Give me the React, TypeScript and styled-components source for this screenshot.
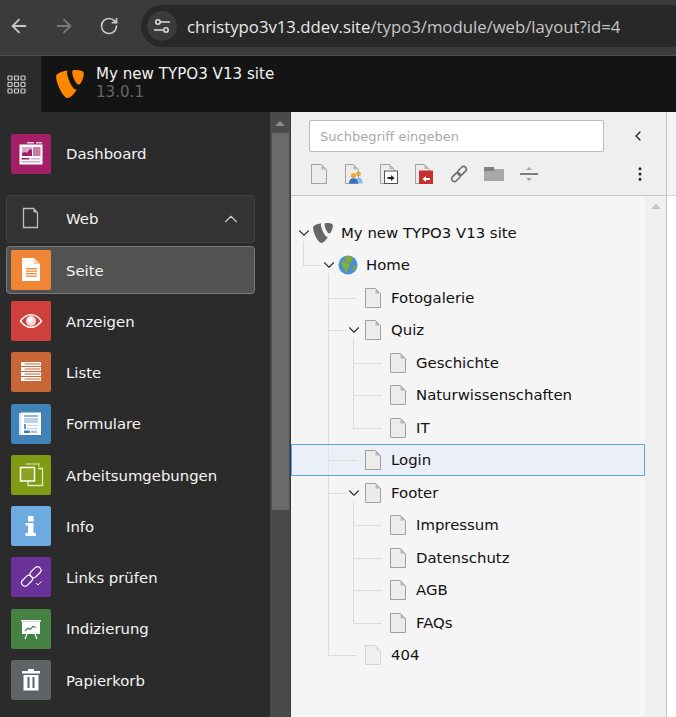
import React from 'react';
import styled, { createGlobalStyle } from 'styled-components';
import { ArrowLeft, ArrowRight, RotateCw, ChevronUp, ChevronDown, ChevronLeft, EllipsisVertical } from 'lucide-react';
import { SiTypo3 } from 'react-icons/si';

const GlobalStyle = createGlobalStyle`
  html, body { margin: 0; padding: 0; overflow: hidden; }
  body { font-family: "DejaVu Sans", Verdana, sans-serif; }
  * { box-sizing: border-box; }
`;

const Page = styled.div`
  width: 676px;
  height: 717px;
  display: flex;
  flex-direction: column;
  overflow: hidden;
  background: #fff;
`;

/* browser chrome */
const BrowserBar = styled.div`
  height: 56px;
  flex: none;
  background: #3b3b3b;
  border-bottom: 1px solid #4e4e4e;
  display: flex;
  align-items: center;
  padding: 0 0 3px 7px;
`;

const NavButton = styled.span<{ $dim?: boolean }>`
  width: 23px;
  height: 23px;
  margin-right: 22px;
  display: flex;
  align-items: center;
  justify-content: center;
  color: ${p => (p.$dim ? '#777' : '#c8c8c8')};
`;

const AddressPill = styled.div`
  flex: 1;
  height: 42px;
  margin-left: -1px;
  margin-right: -20px;
  border-radius: 21px;
  background: #282828;
  display: flex;
  align-items: center;
  padding-left: 6px;
`;

const TuneBadge = styled.span`
  width: 30px;
  height: 30px;
  border-radius: 50%;
  background: #3b3b3b;
  display: flex;
  align-items: center;
  justify-content: center;
  margin-right: 10px;
`;

const Url = styled.span`
  font-family: "Open Sans", "Noto Sans", sans-serif;
  font-size: 16.73px;
  color: #c7c7c7;
  white-space: nowrap;
  b { font-weight: 400; color: #e8e8e8; }
`;

/* typo3 top bar */
const TopBar = styled.header`
  height: 56px;
  flex: none;
  display: flex;
  background: #141414;
`;

const GridButton = styled.div`
  width: 41px;
  background: #2b2b2b;
  display: flex;
  align-items: center;
  justify-content: center;
  padding-right: 8px;
`;

const LogoSlot = styled.div`
  width: 55px;
  display: flex;
  align-items: center;
  justify-content: center;
  padding-left: 3px;
  color: #ff8700;
`;

const SiteName = styled.div`
  display: flex;
  flex-direction: column;
  justify-content: center;
  padding-bottom: 2px;
`;

const SiteTitle = styled.span`
  font-size: 15.1px;
  line-height: 18px;
  color: #f2f2f2;
`;

const SiteVersion = styled.span`
  font-size: 15.1px;
  line-height: 18px;
  color: #666;
`;

const Body = styled.div`
  flex: 1;
  min-height: 0;
  display: flex;
`;

/* module menu */
const Sidebar = styled.nav`
  width: 270px;
  flex: none;
  background: #2b2b2b;
  padding: 18px 0 0 6px;
`;

const MenuList = styled.div`
  display: flex;
  flex-direction: column;
  gap: 3.25px;
`;

const MenuItem = styled.div<{ $active?: boolean; $group?: boolean }>`
  width: 249px;
  height: 48px;
  padding: 0 4px;
  display: flex;
  align-items: center;
  gap: 15px;
  border-radius: 4px;
  border: 1px solid ${p => (p.$active ? '#7a7a7a' : p.$group ? '#414141' : 'transparent')};
  background: ${p => (p.$active ? '#525252' : p.$group ? '#333' : 'transparent')};
  color: #f4f4f4;
  font-size: 14.85px;
  margin-bottom: ${p => (p.$group ? '-0.3px' : '0')};
`;

const DashboardItem = styled(MenuItem)`
  margin-bottom: 17px;
`;

const Tile = styled.span<{ $bg?: string }>`
  width: 40px;
  height: 40px;
  flex: none;
  border-radius: 2px;
  background: ${p => p.$bg ?? 'transparent'};
  display: flex;
  svg { display: block; }
`;

const ItemLabel = styled.span<{ $top?: number }>`
  flex: 1;
  padding-top: ${p => p.$top ?? 1.2}px;
`;

const GroupCaret = styled.span`
  display: flex;
  color: #ccc;
  margin-right: 8px;
`;

/* scrollbar */
const ScrollTrack = styled.div`
  width: 20px;
  flex: none;
  background: #4a4a4a;
  padding: 9px 2px 0;
  display: flex;
  flex-direction: column;
  align-items: center;
`;

const ScrollArrow = styled.span`
  width: 0;
  height: 0;
  border-left: 5px solid transparent;
  border-right: 5px solid transparent;
  border-bottom: 5px solid #8c8c8c;
`;

const ScrollThumb = styled.div`
  width: 17px;
  height: 377px;
  margin-top: 7px;
  background: #6a6a6a;
`;

/* page tree */
const TreePanel = styled.section`
  width: 377px;
  flex: none;
  display: flex;
  flex-direction: column;
  border-left: 1px solid #3a3a3a;
  border-right: 1px solid #c4c4c4;
  background: #efefef;
`;

const TreeToolbar = styled.div`
  height: 84px;
  flex: none;
  padding: 8px 0 0 18px;
  border-bottom: 1px solid #c6c6c6;
`;

const SearchRow = styled.div`
  display: flex;
  align-items: center;
`;

const SearchInput = styled.input`
  width: 295px;
  height: 32px;
  padding: 0 10px;
  border: 1px solid #bbb;
  border-radius: 2px;
  background: #fff;
  font-family: inherit;
  font-size: 13px;
  &::placeholder { color: #aaa; opacity: 1; }
`;

const ToolIcons = styled.div`
  display: flex;
  align-items: center;
  height: 44px;
  margin-left: -8px;
`;

const ToolSlot = styled.span`
  width: 35px;
  display: flex;
  justify-content: center;
`;

const ToolButton = styled.span<{ $left: number }>`
  display: flex;
  margin-left: ${p => p.$left}px;
  color: #222;
`;

const TreeArea = styled.div`
  flex: 1;
  min-height: 0;
  display: flex;
`;

const TreeScroll = styled.div`
  width: 354px;
  flex: none;
  padding-top: 20.4px;
  background: #f5f5f5;
`;

const TreeGutter = styled.div`
  flex: 1;
  display: flex;
  justify-content: center;
  padding-top: 8px;
`;

const GutterArrow = styled.span`
  width: 0;
  height: 0;
  border-left: 5px solid transparent;
  border-right: 5px solid transparent;
  border-bottom: 5px solid #c4c4c4;
`;

const Branch = styled.div<{ $level: number; $tail: number }>`
  position: relative;
  &::before {
    content: '';
    position: absolute;
    left: ${p => 25 * p.$level - 13}px;
    top: -8px;
    bottom: ${p => p.$tail}px;
    width: 1px;
    background: #dcdcdc;
  }
`;

const Row = styled.div<{ $level: number; $selected?: boolean }>`
  position: relative;
  height: 32.5px;
  padding-left: ${p => 21 + 25 * p.$level}px;
  display: flex;
  align-items: center;
  font-size: 14.9px;
  color: #111;
  border: 1px solid ${p => (p.$selected ? '#5aa8ec' : 'transparent')};
  border-width: ${p => (p.$selected ? '1px' : '0 0 0 1px')};
  background: ${p => (p.$selected ? 'rgba(225, 235, 250, 0.55)' : 'transparent')};
  &::before {
    content: '';
    display: ${p => (p.$level === 0 ? 'none' : 'block')};
    position: absolute;
    left: ${p => 25 * p.$level - 14}px;
    top: 50%;
    width: 29px;
    height: 1px;
    background: #dcdcdc;
  }
`;

const Toggle = styled.span<{ $level: number }>`
  position: absolute;
  left: ${p => 25 * p.$level + 5}px;
  top: 50%;
  margin-top: -8px;
  width: 14px;
  height: 16px;
  display: flex;
  align-items: center;
  justify-content: center;
  background: #f5f5f5;
  color: #333;
  svg { flex: none; }
`;

const NodeIcon = styled.span`
  position: relative;
  width: 20px;
  margin-right: 8px;
  flex: none;
  display: flex;
  justify-content: center;
  color: #666;
`;

const Content = styled.div`
  flex: 1;
  display: flex;
  flex-direction: column;
`;

const ContentHead = styled.div`
  height: 84px;
  background: #f4f4f4;
  border-bottom: 1px solid #d6d6d6;
`;

/* drawings */
function TuneIcon() {
  return (
    <svg width="18" height="18" viewBox="0 0 18 18" fill="none" stroke="#dcdcdc" strokeWidth="1.6">
      <circle cx="5" cy="5" r="2.2" />
      <path d="M8 5h9M1 13h9" />
      <circle cx="13" cy="13" r="2.2" />
    </svg>
  );
}

function GridIcon() {
  return (
    <svg width="19" height="19" viewBox="0 0 19 19" fill="none" stroke="#ccc" strokeWidth="1.2">
      {[1, 7.5, 14].map(y =>
        [1, 7.5, 14].map(x => <rect key={`${x}-${y}`} x={x} y={y} width="4" height="4" rx="0.5" />)
      )}
    </svg>
  );
}

function PageIcon({ dim }: { dim?: boolean }) {
  const line = dim ? '#d4d4d4' : '#a0a0a0';
  return (
    <svg width="16" height="20" viewBox="0 0 16 20">
      <path d="M.5.5h10l5 5v14H.5z" fill={dim ? '#f0f0f0' : '#ececec'} stroke={line} />
      <path d="M10.500.5v5h5z" fill={dim ? '#dedede' : '#b8b8b8'} />
    </svg>
  );
}

function GlobeIcon() {
  return (
    <svg width="20" height="20" viewBox="0 0 20 20">
      <circle cx="10" cy="10" r="9.5" fill="#4a8fd8" />
      <path d="M8 1.2c3-.8 6 .2 8 2.4-1 1-2.4.6-3 1.800-.5 1.200 1 1.800.4 3-.8.8-2 .2-2.600-.6C10 7 8.600 7.400 7.400 7 6.400 6 7.800 4.600 7 3.400 6.800 2.400 7.400 1.800 8 1.200z" fill="#7cab2f" />
      <path d="M3 6.800c1.600-.6 3.600.2 5 1 1.400 1 3.400.8 3.600 2.400.2 1.800-1.400 2.600-2 4.200-.4 1.400-.6 3-1.800 3.400C6.400 16 6.600 13.600 5.400 12 4.200 10.800 2.600 9.200 3 6.800z" fill="#86b233" />
      <path d="M15 11c1-.6 2.600-.8 3.400-.2-.2 2-1.200 3.800-2.600 5-1.200-1-1.800-3.400-.8-4.800z" fill="#7cab2f" />
    </svg>
  );
}

function DashboardGlyph() {
  return (
    <svg width="40" height="40" viewBox="0 0 40 40">
      <rect x="16" y="8" width="7" height="1.500" fill="#e9cbdb" />
      <rect x="25" y="8" width="6" height="1.500" fill="#e9cbdb" />
      <rect x="8.500" y="10.500" width="23" height="20" fill="#fff" />
      <rect x="11" y="13" width="10" height="9" fill="#d9a6c3" />
      <path d="M11 22v-3l3-1 2 1 3-4 2 1v6z" fill="#a32068" />
      <rect x="22" y="13" width="7.500" height="9" fill="#c77aa4" />
      <rect x="10.500" y="24" width="8" height="1.500" fill="#a32068" />
      <rect x="20" y="24" width="9.500" height="1.500" fill="#d7a7c3" />
      <rect x="10.500" y="27" width="19" height="1.500" fill="#d7a7c3" />
    </svg>
  );
}

function PageGlyph() {
  return (
    <svg width="40" height="40" viewBox="0 0 40 40">
      <path d="M11 8h12l6 6v17H11z" fill="#fff" />
      <path d="M23 8v6h6z" fill="#f8cfa6" />
      <path d="M15 18h11v1.200H15zM15 20.500h11v1.200H15zM15 23h11v1.200H15zM15 25.500h11v1.200H15z" fill="#f08536" />
    </svg>
  );
}

function EyeGlyph() {
  return (
    <svg width="40" height="40" viewBox="0 0 40 40">
      <path d="M9.500 20c3-4.200 6.500-6.300 10.500-6.300s7.500 2.100 10.500 6.300c-3 4.200-6.500 6.300-10.500 6.300s-7.500-2.100-10.500-6.300z" fill="none" stroke="#fff" strokeWidth="1.500" />
      <circle cx="20" cy="20" r="5" fill="#f6d9d6" />
      <circle cx="19" cy="18.500" r="2.600" fill="#fff" />
    </svg>
  );
}

function ListGlyph() {
  return (
    <svg width="40" height="40" viewBox="0 0 40 40">
      {[10, 15, 20, 25].map(y => (
        <g key={y}>
          <rect x="10.500" y={y + 0.5} width="19" height="3" fill="#e4b196" stroke="#fff" />
          <rect x="10.500" y={y + 0.5} width="3" height="3" fill="#fff" />
        </g>
      ))}
    </svg>
  );
}

function FormGlyph() {
  return (
    <svg width="40" height="40" viewBox="0 0 40 40">
      <rect x="8" y="9" width="21" height="22" fill="#d8e6f1" />
      <rect x="10" y="8.500" width="20" height="22.500" fill="#fff" />
      <rect x="13" y="11" width="14" height="2" fill="#8fb7d6" />
      <rect x="13" y="14" width="14" height="5" fill="#bcd4e6" />
      <rect x="13" y="20" width="2" height="5" fill="#5f99c4" />
      <rect x="16" y="21" width="11" height="1" fill="#bcd4e6" />
      <rect x="16" y="24" width="11" height="1" fill="#bcd4e6" />
      <rect x="13" y="26.500" width="6" height="2.500" fill="#3f83b8" />
      <rect x="20" y="26.500" width="6" height="2.500" fill="#a5c6de" />
    </svg>
  );
}

function WorkspaceGlyph() {
  return (
    <svg width="40" height="40" viewBox="0 0 40 40" fill="none">
      <path d="M27 13.500h4.500V30.500H17V26" stroke="#e3e9c8" strokeWidth="1.300" />
      <path d="M15 9h13v3" stroke="#c5d18a" strokeWidth="1.300" />
      <rect x="9.500" y="12.500" width="14" height="13.500" stroke="#fff" strokeWidth="1.500" fill="#8ba321" />
    </svg>
  );
}

function InfoGlyph() {
  return (
    <svg width="40" height="40" viewBox="0 0 40 40" fill="#fff">
      <rect x="17" y="10" width="5.500" height="5.500" />
      <path d="M14.500 17h8v10h2.500v3H14.500v-3H17v-7.500h-2.500z" />
    </svg>
  );
}

function LinksGlyph() {
  return (
    <svg width="40" height="40" viewBox="0 0 40 40" fill="none" stroke="#fff" strokeWidth="1.200">
      <rect x="21" y="9" width="7" height="12.500" rx="3.500" transform="rotate(45 24.500 15.250)" />
      <rect x="12.500" y="17.500" width="7" height="12.500" rx="3.500" transform="rotate(45 16 23.750)" />
      <path d="M25 26l2 2 3.500-3.500" strokeWidth="1" />
    </svg>
  );
}

function IndexGlyph() {
  return (
    <svg width="40" height="40" viewBox="0 0 40 40">
      <rect x="10" y="11" width="20" height="1.500" fill="#fff" />
      <rect x="11" y="12.500" width="18" height="12.500" fill="#fff" />
      <path d="M14 22l3-3 2 1.500 3-3 3 1" fill="none" stroke="#468144" strokeWidth="1.300" />
      <path d="M16 25l-2 5M24 25l2 5" stroke="#fff" strokeWidth="1.200" />
    </svg>
  );
}

function TrashGlyph() {
  return (
    <svg width="40" height="40" viewBox="0 0 40 40">
      <path d="M11 11h6v-2h6v2h6v2.500H11z" fill="#fff" />
      <path d="M12.500 15h15v15.500h-15z" fill="#fff" />
      <path d="M16.500 17h2v11h-2zM21.500 17h2v11h-2z" fill="#5e6366" />
    </svg>
  );
}

function MarkerIcon() {
  return (
    <svg width="18" height="20" viewBox="0 0 18 20">
      <path d="M.5.5h8l5 5V19.500H.5z" fill="#ececec" stroke="#a0a0a0" />
      <path d="M8.500.5v5h5z" fill="#b8b8b8" />
      <circle cx="13.500" cy="10" r="2.400" fill="#e8a33d" />
      <path d="M10 19.500c0-4 1.400-6 3.800-6s3.900 2 3.900 6z" fill="#8dbbe6" />
      <circle cx="8.500" cy="11.500" r="2.600" fill="#f0a93a" />
      <path d="M4 19.500c0-3.500 1.800-5.200 4.500-5.200s4.500 1.700 4.500 5.200z" fill="#2f6fc0" />
    </svg>
  );
}

function ShortcutIcon() {
  return (
    <svg width="18" height="20" viewBox="0 0 18 20">
      <path d="M.5.5h9l4.500 4.500V19.500H.5z" fill="#ececec" stroke="#a0a0a0" />
      <path d="M9.500.5V5H14z" fill="#b8b8b8" />
      <rect x="4.500" y="7" width="13" height="12.500" fill="#fff" stroke="#555" />
      <path d="M7.500 15v-2h3.500v-2l3.500 3-3.500 3v-2z" fill="#222" />
    </svg>
  );
}

function ExternalIcon() {
  return (
    <svg width="18" height="20" viewBox="0 0 18 20">
      <path d="M.5.5h9l4.500 4.500V19.500H.5z" fill="#ececec" stroke="#a0a0a0" />
      <path d="M9.500.5V5H14z" fill="#b8b8b8" />
      <rect x="4" y="6.500" width="14" height="13.500" fill="#c6302f" />
      <path d="M15 14h-4v-2l-3.500 3 3.500 3v-2h4z" fill="#fff" />
    </svg>
  );
}

function ChainIcon() {
  return (
    <svg width="18" height="18" viewBox="0 0 18 18" fill="none" stroke="#6e6e6e" strokeWidth="1.700">
      <rect x="9.300" y="0.800" width="5.400" height="10" rx="2.700" transform="rotate(45 12 5.800)" />
      <rect x="3.300" y="7.200" width="5.400" height="10" rx="2.700" transform="rotate(45 6 12.200)" />
    </svg>
  );
}

function FolderIcon() {
  return (
    <svg width="20" height="16" viewBox="0 0 20 16">
      <path d="M0 1h9l2 2h9v12H0z" fill="#a8a8a8" />
      <rect x="0" y="1" width="10" height="4" fill="#808080" />
    </svg>
  );
}

function DividerIcon() {
  return (
    <svg width="18" height="16" viewBox="0 0 18 16">
      <rect x="0" y="7" width="18" height="2" fill="#7e7e7e" />
      <path d="M6 4l3-3 3 3zM6 12l3 3 3-3z" fill="#a8a8a8" />
    </svg>
  );
}

const modules = [
  { label: 'Seite', bg: '#f08536', glyph: <PageGlyph />, active: true },
  { label: 'Anzeigen', bg: '#d0403a', glyph: <EyeGlyph /> },
  { label: 'Liste', bg: '#c96637', glyph: <ListGlyph /> },
  { label: 'Formulare', bg: '#3f83b8', glyph: <FormGlyph /> },
  { label: 'Arbeitsumgebungen', bg: '#7f9a13', glyph: <WorkspaceGlyph /> },
  { label: 'Info', bg: '#6daae0', glyph: <InfoGlyph /> },
  { label: 'Links prüfen', bg: '#6a3199', glyph: <LinksGlyph /> },
  { label: 'Indizierung', bg: '#468144', glyph: <IndexGlyph /> },
  { label: 'Papierkorb', bg: '#5e6366', glyph: <TrashGlyph /> },
];

type TreeNode = { label: string; dim?: boolean; selected?: boolean; icon?: 'logo' | 'globe'; children?: TreeNode[] };

const tree: TreeNode = {
  label: 'My new TYPO3 V13 site',
  icon: 'logo',
  children: [
    {
      label: 'Home',
      icon: 'globe',
      children: [
        { label: 'Fotogalerie' },
        {
          label: 'Quiz',
          children: [{ label: 'Geschichte' }, { label: 'Naturwissenschaften' }, { label: 'IT' }],
        },
        { label: 'Login', selected: true },
        {
          label: 'Footer',
          children: [{ label: 'Impressum' }, { label: 'Datenschutz' }, { label: 'AGB' }, { label: 'FAQs' }],
        },
        { label: '404', dim: true },
      ],
    },
  ],
};

const countRows = (node: TreeNode): number =>
  1 + (node.children ?? []).reduce((sum, child) => sum + countRows(child), 0);

function TreeItem({ node, level }: { node: TreeNode; level: number }) {
  const kids = node.children;
  const last = kids?.[kids.length - 1];
  return (
    <>
      <Row $level={level} $selected={node.selected}>
        {kids && (
          <Toggle $level={level}>
            <ChevronDown size={18} strokeWidth={1.5} />
          </Toggle>
        )}
        <NodeIcon>
          {node.icon === 'logo' && <SiTypo3 size={20} />}
          {node.icon === 'globe' && <GlobeIcon />}
          {!node.icon && <PageIcon dim={node.dim} />}
        </NodeIcon>
        {node.label}
      </Row>
      {kids && last && (
        <Branch $level={level + 1} $tail={(countRows(last) - 1) * 32.5 + 16}>
          {kids.map(child => (
            <TreeItem key={child.label} node={child} level={level + 1} />
          ))}
        </Branch>
      )}
    </>
  );
}

export default function App() {
  return (
    <Page>
      <GlobalStyle />
      <BrowserBar>
        <NavButton>
          <ArrowLeft size={22} strokeWidth={2} />
        </NavButton>
        <NavButton $dim>
          <ArrowRight size={22} strokeWidth={2} />
        </NavButton>
        <NavButton>
          <RotateCw size={20} strokeWidth={2} />
        </NavButton>
        <AddressPill>
          <TuneBadge>
            <TuneIcon />
          </TuneBadge>
          <Url>
            <b>christypo3v13.ddev.site</b>/typo3/module/web/layout?id=4
          </Url>
        </AddressPill>
      </BrowserBar>

      <TopBar>
        <GridButton>
          <GridIcon />
        </GridButton>
        <LogoSlot>
          <SiTypo3 size={28} />
        </LogoSlot>
        <SiteName>
          <SiteTitle>My new TYPO3 V13 site</SiteTitle>
          <SiteVersion>13.0.1</SiteVersion>
        </SiteName>
      </TopBar>

      <Body>
        <Sidebar>
          <DashboardItem>
            <Tile $bg="#a32068">
              <DashboardGlyph />
            </Tile>
            <ItemLabel $top={0.6}>Dashboard</ItemLabel>
          </DashboardItem>
          <MenuList>
            <MenuItem $group>
              <Tile>
                <svg width="40" height="40" viewBox="0 0 40 40">
                  <path d="M12.500 9.500h10l4 4v15h-14z" fill="none" stroke="#bdbdbd" strokeWidth="1.300" />
                  <path d="M22.500 9.500v4h4z" fill="#bdbdbd" />
                </svg>
              </Tile>
              <ItemLabel $top={0.6}>Web</ItemLabel>
              <GroupCaret>
                <ChevronUp size={22} strokeWidth={1.2} />
              </GroupCaret>
            </MenuItem>
            {modules.map(m => (
              <MenuItem key={m.label} $active={m.active}>
                <Tile $bg={m.bg}>{m.glyph}</Tile>
                <ItemLabel>{m.label}</ItemLabel>
              </MenuItem>
            ))}
          </MenuList>
        </Sidebar>

        <ScrollTrack>
          <ScrollArrow />
          <ScrollThumb />
        </ScrollTrack>

        <TreePanel>
          <TreeToolbar>
            <SearchRow>
              <SearchInput placeholder="Suchbegriff eingeben" readOnly />
              <ToolButton $left={26}>
                <ChevronLeft size={16} strokeWidth={2} />
              </ToolButton>
            </SearchRow>
            <ToolIcons>
              <ToolSlot>
                <PageIcon />
              </ToolSlot>
              <ToolSlot>
                <MarkerIcon />
              </ToolSlot>
              <ToolSlot>
                <ShortcutIcon />
              </ToolSlot>
              <ToolSlot>
                <ExternalIcon />
              </ToolSlot>
              <ToolSlot>
                <ChainIcon />
              </ToolSlot>
              <ToolSlot>
                <FolderIcon />
              </ToolSlot>
              <ToolSlot>
                <DividerIcon />
              </ToolSlot>
              <ToolButton $left={85}>
                <EllipsisVertical size={18} strokeWidth={2} />
              </ToolButton>
            </ToolIcons>
          </TreeToolbar>
          <TreeArea>
            <TreeScroll>
              <TreeItem node={tree} level={0} />
            </TreeScroll>
            <TreeGutter>
              <GutterArrow />
            </TreeGutter>
          </TreeArea>
        </TreePanel>

        <Content>
          <ContentHead />
        </Content>
      </Body>
    </Page>
  );
}
